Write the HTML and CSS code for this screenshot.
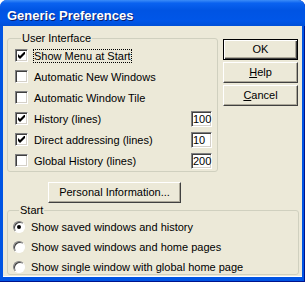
FILE: index.html
```html
<!DOCTYPE html>
<html lang="en">
<head>
    <meta charset="UTF-8">
    <meta name="viewport" content="width=device-width, initial-scale=1.0">
    <title>Generic Preferences</title>
    <link rel="stylesheet" href="styles.css">
</head>
<body>
<div class="window">
    <div class="titlebar">Generic Preferences</div>
    <div class="client">
        <div class="top">
            <fieldset class="group ui">
                <legend>User Interface</legend>
                <div class="row">
                    <span class="check on"><svg width="7" height="7" viewBox="0 0 7 7"><path d="M0 2v3l2 2 5-5V-1L2 4z" fill="#000"/></svg></span>
                    <span class="label focus">Show Menu at Start</span>
                </div>
                <div class="row">
                    <span class="check"></span>
                    <span class="label">Automatic New Windows</span>
                </div>
                <div class="row">
                    <span class="check"></span>
                    <span class="label">Automatic Window Tile</span>
                </div>
                <div class="row">
                    <span class="check on"><svg width="7" height="7" viewBox="0 0 7 7"><path d="M0 2v3l2 2 5-5V-1L2 4z" fill="#000"/></svg></span>
                    <span class="label">History (lines)</span>
                    <span class="field">100</span>
                </div>
                <div class="row">
                    <span class="check on"><svg width="7" height="7" viewBox="0 0 7 7"><path d="M0 2v3l2 2 5-5V-1L2 4z" fill="#000"/></svg></span>
                    <span class="label">Direct addressing (lines)</span>
                    <span class="field">10</span>
                </div>
                <div class="row">
                    <span class="check"></span>
                    <span class="label">Global History (lines)</span>
                    <span class="field">200</span>
                </div>
            </fieldset>
            <div class="buttons">
                <div class="btn default">OK</div>
                <div class="btn"><u>H</u>elp</div>
                <div class="btn"><u>C</u>ancel</div>
            </div>
        </div>
        <div class="btn personal">Personal Information...</div>
        <fieldset class="group start">
            <legend>Start</legend>
            <div class="row">
                <span class="radio on"></span>
                <span class="label">Show saved windows and history</span>
            </div>
            <div class="row">
                <span class="radio"></span>
                <span class="label">Show saved windows and home pages</span>
            </div>
            <div class="row">
                <span class="radio"></span>
                <span class="label">Show single window with global home page</span>
            </div>
        </fieldset>
    </div>
</div>
</body>
</html>
```

FILE: styles.css
```css
html, body {
    margin: 0;
    padding: 0;
}
body {
    font-family: "Liberation Sans", Arial, sans-serif;
    font-size: 11px;
    color: #000;
    background: #fff;
}
.window {
    width: 305px;
    height: 282px;
    box-sizing: border-box;
    background: #0054e3;
    border-radius: 7px 7px 0 0;
    display: flex;
    flex-direction: column;
    padding: 0 3px 5px 3px;
    box-shadow: inset 0 -1px #00138c, inset -1px 0 #00138c;
}
.titlebar {
    height: 26px;
    margin: 0 -3px;
    padding: 2px 7px 0 7px;
    box-sizing: border-box;
    border-radius: 7px 7px 0 0;
    background: linear-gradient(to bottom, #3c8cf8 0%, #0a62f0 12%, #0054e3 40%, #0056e8 80%, #0050d8 100%);
    color: #fff;
    font-weight: bold;
    font-size: 13px;
    line-height: 28px;
    text-shadow: 1px 1px #0a1e6e;
}
.client {
    flex: 1;
    background: #ece9d8;
    padding: 6px 4px 0 4px;
    box-shadow: inset 0 -1px #fff;
}
.top {
    display: flex;
    gap: 5px;
}
.group {
    margin: 0;
    padding: 0;
    border: 1px solid #d0d0bf;
    border-radius: 3px;
}
.group legend {
    padding: 0 1px;
    margin-left: 6px;
    line-height: 13px;
}
.ui {
    width: 213px;
    height: 140px;
    box-sizing: border-box;
    padding: 0 5px 0 7px;
}
.row {
    display: flex;
    align-items: center;
    height: 21px;
}
.check {
    width: 13px;
    height: 13px;
    box-sizing: border-box;
    background: #fff;
    border: 1px solid;
    border-color: #808080 #fff #fff #808080;
    box-shadow: inset 1px 1px #404040, inset -1px -1px #d4d0c8;
    display: flex;
    align-items: center;
    justify-content: center;
    margin-right: 5px;
}
.label {
    padding: 0 1px;
    line-height: 14px;
}
.focus {
    outline: 1px dotted #000;
    outline-offset: -1px;
}
.field {
    margin-left: auto;
    width: 21px;
    height: 16px;
    box-sizing: border-box;
    background: #fff;
    border: 1px solid;
    border-color: #808080 #fff #fff #808080;
    box-shadow: inset 1px 1px #404040, inset -1px -1px #d4d0c8;
    padding: 0 1px;
    line-height: 14px;
    text-align: left;
}
.buttons {
    display: flex;
    flex-direction: column;
    gap: 2px;
    padding-top: 7px;
}
.btn {
    width: 75px;
    height: 21px;
    box-sizing: border-box;
    background: #ece9d8;
    border: 1px solid;
    border-color: #fff #404040 #404040 #fff;
    box-shadow: inset -1px -1px #aca899;
    text-align: center;
    line-height: 18px;
}
.btn.default {
    border-color: #000;
    box-shadow: inset 1px 1px #fff, inset -1px -1px #404040, inset -2px -2px #aca899;
}
.btn u {
    text-decoration: underline;
}
.personal {
    width: 133px;
    margin: 10px 0 0 41px;
}
.start {
    margin-top: 1px;
    width: 292px;
    height: 71px;
    box-sizing: border-box;
    padding: 0 0 0 5px;
}
.start .row {
    height: 20px;
}
.radio {
    width: 12px;
    height: 12px;
    box-sizing: border-box;
    border-radius: 50%;
    background: #fff;
    border: 1px solid;
    border-color: #808080 #fff #fff #808080;
    box-shadow: inset 1px 1px #404040;
    display: flex;
    align-items: center;
    justify-content: center;
    margin-right: 5px;
}
.radio.on::after {
    content: "";
    width: 4px;
    height: 4px;
    border-radius: 50%;
    background: #000;
}
```
